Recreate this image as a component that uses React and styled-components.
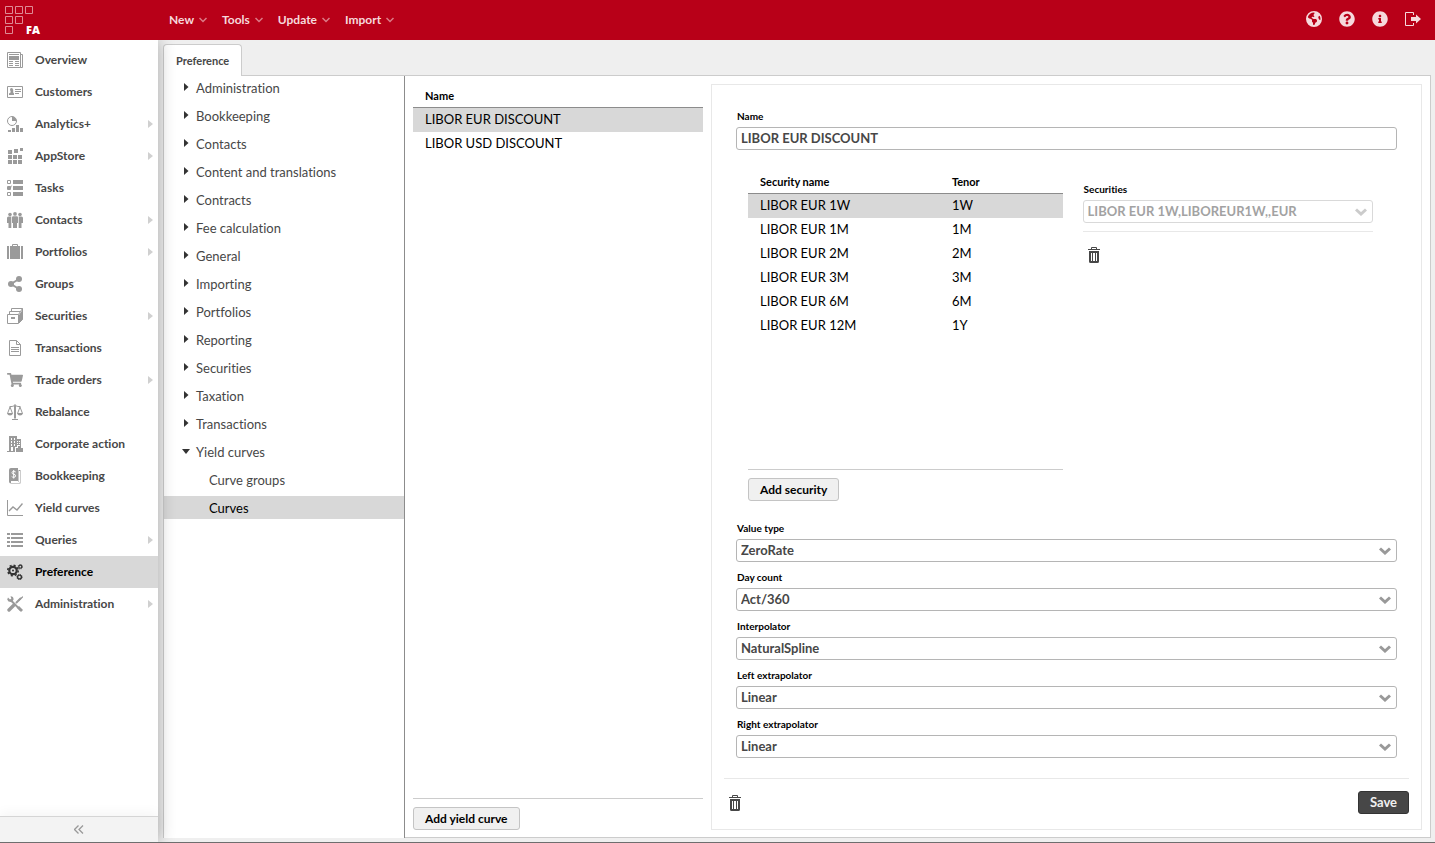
import React, { useState } from 'react'
import styled, { createGlobalStyle } from 'styled-components'
import { FaInfoCircle, FaQuestionCircle, FaShoppingCart } from 'react-icons/fa'
import { FaEarthAmericas } from 'react-icons/fa6'

const GlobalStyle = createGlobalStyle`
    * {
        box-sizing: border-box;
    }

    body {
        margin: 0;
        font-family: Lato, "Open Sans", sans-serif;
        font-size: 13px;
        font-variant-ligatures: none;
        color: #000;
    }

    button, input, select {
        font-family: inherit;
        font-variant-ligatures: none;
        margin: 0;
    }
`

const Page = styled.div`
    display: flex;
    flex-direction: column;
    min-height: 100vh;
    background-color: #efefef;
    border-bottom: 1px solid #6e6e6e;
`

const Header = styled.header`
    display: flex;
    align-items: center;
    height: 40px;
    background-color: #b80018;
`

const LogoLink = styled.a`
    width: 163px;
    height: 40px;
`

const Menu = styled.nav`
    display: flex;
    flex: 1;
    gap: 3px;
`

const MenuButton = styled.button`
    display: flex;
    align-items: center;
    gap: 5px;
    padding: 0 6px;
    border: none;
    background: none;
    font-size: 12px;
    font-weight: 700;
    line-height: 20px;
    color: #f6d9dc;
    cursor: pointer;
`

const HeaderTools = styled.div`
    display: flex;
    gap: 17px;
    padding: 0 14px 2px 0;
`

const IconButton = styled.button`
    display: flex;
    align-items: center;
    justify-content: center;
    width: 16px;
    height: 16px;
    padding: 0;
    border: none;
    background: none;
    color: ${(props) => (props.$light ? '#f6d9dc' : '#474747')};
    cursor: pointer;
`

const Body = styled.div`
    display: flex;
    flex: 1;
`

const Sidebar = styled.aside`
    display: flex;
    flex-direction: column;
    justify-content: space-between;
    flex: none;
    width: 158px;
    z-index: 1;
    background-color: #fff;
    box-shadow: 0 0 16px rgba(0, 0, 0, 0.3);
    clip-path: inset(0 -24px 0 0);
`

const NavList = styled.nav`
    padding-top: 4px;
`

const NavItem = styled.a`
    display: flex;
    align-items: center;
    gap: 12px;
    height: 32px;
    padding: 0 5px 0 7px;
    font-size: 12px;
    font-weight: 700;
    text-decoration: none;
    color: ${(props) => (props.$active ? '#000' : '#474747')};
    background-color: ${(props) => (props.$active ? '#d8d8d8' : 'transparent')};

    > svg:first-child {
        flex: none;
        color: ${(props) => (props.$active ? '#333' : '#9a9a9a')};
    }
`

const NavLabel = styled.span`
    flex: 1;
    padding-bottom: 1px;
`

const Collapse = styled.button`
    display: flex;
    align-items: center;
    justify-content: center;
    height: 26px;
    border: none;
    border-top: 1px solid #d5d5d5;
    background-color: #f3f3f3;
    color: #999;
    box-shadow: 0 -4px 12px rgba(0, 0, 0, 0.04);
`

const Main = styled.main`
    display: flex;
    flex-direction: column;
    flex: 1;
    min-width: 0;
    padding: 4px 4px 4px 5px;
`

const Tab = styled.button`
    align-self: flex-start;
    height: 32px;
    margin-bottom: -1px;
    padding: 0 12px 1px;
    border: 1px solid #ccc;
    border-bottom: none;
    border-radius: 4px 4px 0 0;
    background-color: #fff;
    font-size: 11px;
    font-weight: 700;
    color: #474747;
    z-index: 0;
`

const Workspace = styled.div`
    display: flex;
    flex: 1;
    border: 1px solid #ccc;
    border-bottom: none;
    background-color: #fff;
`

const Tree = styled.nav`
    flex: none;
    width: 241px;
    border-right: 1px solid #8c8c8c;
`

const TreeRow = styled.a`
    display: flex;
    align-items: center;
    gap: 5px;
    height: 23px;
    margin-bottom: 5px;
    padding: 0 0 0 ${(props) => (props.$child ? '45px' : '17px')};
    font-size: 13px;
    text-decoration: none;
    color: ${(props) => (props.$active ? '#000' : '#474747')};
    background-color: ${(props) => (props.$active ? '#d8d8d8' : 'transparent')};
`

const Content = styled.div`
    display: flex;
    flex: 1;
    gap: 8px;
    min-width: 0;
    padding: 8px 8px 7px;
    border-bottom: 1px solid #ccc;
`

const ListColumn = styled.section`
    display: flex;
    flex-direction: column;
    align-items: flex-start;
    flex: none;
    gap: 8px;
    width: 290px;
`

const TableFrame = styled.div`
    flex: 1;
    width: 100%;
    min-height: 240px;
    border-bottom: 1px solid #ccc;
`

const Table = styled.table`
    width: 100%;
    table-layout: fixed;
    border-spacing: 0;

    th {
        width: ${(props) => props.$first};
        height: 24px;
        padding: 0 12px;
        border-bottom: 1px solid #8c8c8c;
        font-size: 11px;
        font-weight: 700;
        line-height: 16px;
        text-align: left;
    }

    th + th {
        width: auto;
    }

    td {
        height: 24px;
        padding: 0 12px 2px;
        line-height: 16px;
    }
`

const Row = styled.tr`
    background-color: ${(props) => (props.$active ? '#d8d8d8' : 'transparent')};
    cursor: pointer;
`

const Button = styled.button`
    height: 23px;
    padding: 0 11px 1px;
    border: 1px solid ${(props) => (props.$dark ? '#333' : '#c4c4c4')};
    border-radius: 3px;
    background-color: ${(props) => (props.$dark ? '#474747' : '#f0f0f0')};
    font-size: ${(props) => (props.$dark ? '13px' : '12px')};
    font-weight: 700;
    color: ${(props) => (props.$dark ? '#f0f0f0' : '#000')};
    cursor: pointer;
`

const Detail = styled.form`
    display: flex;
    flex-direction: column;
    flex: 1;
    min-width: 0;
    padding: 25px 12px 15px;
    border: 1px solid #e8e8e8;
`

const DetailBody = styled.div`
    display: flex;
    flex-direction: column;
    flex: 1;
    padding: 0 12px 20px;
`

const Securities = styled.div`
    display: grid;
    grid-template-columns: 13fr 12fr;
    gap: 20px;
    flex: 1;
    padding: 20px 24px 21px 12px;
`

const SecurityTable = styled.section`
    display: flex;
    flex-direction: column;
    align-items: flex-start;
    gap: 8px;
`

const SecurityEditor = styled.section`
    padding-top: 13px;
`

const EditorTools = styled.div`
    margin-top: 8px;
    padding: 15px 3px;
    border-top: 1px solid #e8e8e8;
`

const Fields = styled.div`
    display: grid;
    gap: 9px;
`

const Field = styled.div`
    display: flex;
    flex-direction: column;
`

const Label = styled.label`
    margin-bottom: 5px;
    padding-left: 1px;
    font-size: 10px;
    font-weight: 700;
    line-height: 12px;
`

const Input = styled.input`
    width: 100%;
    height: 23px;
    padding: 0 4px 2px;
    border: 1px solid #b5b5b5;
    border-radius: 3px;
    font-size: 13px;
    font-weight: 700;
    color: #474747;
`

const SelectBox = styled.div`
    display: grid;
    align-items: center;
    opacity: ${(props) => (props.$disabled ? 0.5 : 1)};

    > * {
        grid-area: 1 / 1;
    }

    > svg {
        justify-self: end;
        margin-right: 6px;
        pointer-events: none;
    }
`

const Select = styled.select`
    width: 100%;
    height: 23px;
    padding: 0 24px 2px 4px;
    border: 1px solid #b5b5b5;
    border-radius: 3px;
    appearance: none;
    background-color: #fff;
    font-size: 13px;
    font-weight: 700;
    color: #474747;

    &:disabled {
        opacity: 1;
    }
`

const DetailFooter = styled.footer`
    display: flex;
    align-items: center;
    justify-content: space-between;
    padding: 12px 0 0 3px;
    border-top: 1px solid #e8e8e8;
`

const Svg = ({ children }) => (
    <svg width="16" height="16" viewBox="0 0 16 16" fill="currentColor" aria-hidden="true">
        {children}
    </svg>
)

const OverviewIcon = () => (
    <Svg>
        <path d="M.5.5h13v15H.5zM13.5 2.5h2v13h-2" fill="none" stroke="currentColor" />
        <path d="M2 2h10v1H2zM2 4h10v4H2zM2 9h4v1H2zM8 9h4v1H8zM2 11h4v1H2zM8 11h4v1H8zM2 13h4v1H2zM8 13h4v1H8z" />
    </Svg>
)

const CustomersIcon = () => (
    <Svg>
        <path d="M.5 2.5h15v11H.5z" fill="none" stroke="currentColor" />
        <path d="M2 11V9.400l1.600-1V5.500h2.600v2.900L7 9.400V11zM8 5h6v1H8zM8 7h6v1H8zM8 9h4v1H8z" />
        <circle cx="4.500" cy="5.500" r="1.500" />
    </Svg>
)

const AnalyticsIcon = () => (
    <Svg>
        <circle cx="5" cy="5" r="4.500" fill="none" stroke="currentColor" />
        <path d="M5 5V.5A4.500 4.500 0 0 1 9.500 5zM1 14h3v2H1zM5 12h3v4H5zM9 9h3v7H9zM13 12h3v4h-3z" />
    </Svg>
)

const AppStoreIcon = () => (
    <Svg>
        <path d="M1 2h4v4H1zM7 1h4v4H7zM13 0h3v3h-3zM1 7h4v4H1zM6 7h4v4H6zM11 7h4v4h-4zM1 12h4v4H1zM6 12h4v4H6zM11 12h4v4h-4z" />
    </Svg>
)

const TasksIcon = () => (
    <Svg>
        <path d="M.5.500h3v3h-3zM.5 6.500h3v3h-3zM.5 12.500h3v3h-3z" fill="none" stroke="currentColor" />
        <path d="M6 0h10v4H6zM6 6h10v4H6zM6 12h10v4H6zM1 7h2v2H1zM3 7l2-2-1 3z" />
    </Svg>
)

const ContactsIcon = () => (
    <Svg>
        <circle cx="3" cy="2.500" r="1.800" />
        <circle cx="13" cy="2.500" r="1.800" />
        <circle cx="8" cy="1.900" r="1.900" />
        <path d="M0 6q0-1.500 1.500-1.500h2.800V16H1.500v-5H0zM16 6q0-1.500-1.500-1.500h-2.800V16h2.800v-5H16zM5 5.500q0-1.200 1.200-1.200h3.600q1.200 0 1.200 1.200V11h-1v5H6v-5H5z" />
    </Svg>
)

const PortfolioIcon = () => (
    <Svg>
        <path d="M5.500 3V.5h5V3" fill="none" stroke="currentColor" />
        <path d="M0 2h2v13H0zM3 2h10v13H3zM14 2h2v13h-2z" />
    </Svg>
)

const GroupsIcon = () => (
    <Svg>
        <path d="M12 3 4 8l8 5" fill="none" stroke="currentColor" strokeWidth="2" />
        <circle cx="12" cy="3" r="3" />
        <circle cx="4" cy="8" r="3" />
        <circle cx="12" cy="13" r="3" />
    </Svg>
)

const SecuritiesIcon = () => (
    <Svg>
        <path d="M.5 6.500h11v9H.5zM2.500 6V3.500h11M4.500 3V.500h11v11L12 15M11.500 6.500l2-3 2-3" fill="none" stroke="currentColor" />
        <path d="M12 7l2-3 2-3v10l-4 4zM4 9h4v2H4z" />
    </Svg>
)

const TransactionsIcon = () => (
    <Svg>
        <path d="M2.500.500h7l4 4v11h-11zM9.500.5v4h4" fill="none" stroke="currentColor" />
        <path d="M4 7h8v1H4zM4 9h8v1H4zM4 11h8v1H4z" />
    </Svg>
)

const RebalanceIcon = () => (
    <Svg>
        <path d="M8 0v15M2.500 2.500q2.500.5 5.500-1 3 1.500 5.500 1M3 3 .5 9.500M3 3l2.500 6.500M13 3l-2.500 6.500M13 3l2.500 6.500M5 15.500h6" fill="none" stroke="currentColor" />
        <path d="M0 9h6q-.5 2.500-3 2.500T0 9zM10 9h6q-.5 2.500-3 2.500T10 9zM7 2h2v12H7z" />
    </Svg>
)

const CorporateIcon = () => (
    <Svg>
        <path fillRule="evenodd" d="M2 0h8v3h4v7h-1V9h-3v2H8v5H0v-1h2zM4 2v2h1V2zM7 2v2h1V2zM4 5v2h1V5zM7 5v2h1V5zM4 8v2h1V8zM7 8v2h1V8zM4 11v4h2v-4zM10 5v1h1V5zM12 5v1h1V5zM10 7v1h1V7zM12 7v1h1V7z" />
        <path d="M9 12h2v-2h3v2h2v4H9z" />
    </Svg>
)

const BookIcon = () => (
    <Svg>
        <path d="M2 2q0-2 2-2h7v13H4v1h7.500V2h2v13.500H4q-2 0-2-2z" />
        <path d="M8.700 4Q8 3.300 6.700 3.300 5 3.400 5 4.700q0 1.300 1.700 1.500 1.900.2 1.900 1.700 0 1.300-1.900 1.400-1.300 0-2-.8M6.700 2v8.500M12.500 3v11.500H4" fill="none" stroke="#fff" />
    </Svg>
)

const YieldIcon = () => (
    <Svg>
        <path d="M.5 0v15.500H16" fill="none" stroke="currentColor" />
        <path d="M2 11l4-4 4 3 5.500-6.500" fill="none" stroke="currentColor" strokeWidth="1.400" />
    </Svg>
)

const QueriesIcon = () => (
    <Svg>
        <path d="M0 1h3v2H0zM4 1h12v2H4zM0 5h3v2H0zM4 5h12v2H4zM0 9h3v2H0zM4 9h12v2H4zM0 13h3v2H0zM4 13h12v2H4z" />
    </Svg>
)

const GearsIcon = () => (
    <Svg>
        <g fill="none" stroke="currentColor">
            <circle cx="6" cy="6.500" r="3.700" strokeWidth="2.200" />
            <circle cx="6" cy="6.500" r="5.200" strokeWidth="1.600" strokeDasharray="2.040 2.040" />
            <circle cx="13.300" cy="2.700" r="1.500" strokeWidth="1.200" />
            <circle cx="13.300" cy="2.700" r="2.300" strokeWidth=".8" strokeDasharray="1 .8" />
            <circle cx="12.500" cy="13" r="1.900" strokeWidth="1.400" />
            <circle cx="12.500" cy="13" r="2.700" strokeWidth=".8" strokeDasharray="1.200 .920" />
        </g>
        <circle cx="6" cy="6.500" r="1" />
    </Svg>
)

const ToolsIcon = () => (
    <Svg>
        <path d="M4 4.500 13.500 14M13.500 2.500 9.500 6.500" fill="none" stroke="currentColor" strokeWidth="2" strokeLinecap="round" />
        <path d="M6.500 9.500 2 14" fill="none" stroke="currentColor" strokeWidth="3.400" strokeLinecap="round" />
        <path d="M1 1.500 3 3.500 4.300 2.700 3.500.3Q6.500.2 6.600 3.600L5 6Q1 6.500.2 3.500zM15.800 0 16 1.500 12 5 11 4zM10 12l2-2 4 4-2 2z" />
    </Svg>
)

const LogoutIcon = () => (
    <Svg>
        <path d="M8.500 4V1.500h-8v13h8V12" fill="none" stroke="currentColor" />
        <path d="M6 6h5V3.500L16 8l-5 4.500V10H6z" />
    </Svg>
)

const TrashIcon = () => (
    <Svg>
        <path d="M5.500 2V.5h5V2" fill="none" stroke="currentColor" />
        <path d="M2 2h12v1H2z" />
        <path fillRule="evenodd" d="M3 4h10v1H3zM3 5h10v9.500q0 1.500-1.500 1.500h-7Q3 16 3 14.500zM5 6v8h1V6zM7 6v8h2V6zM10 6v8h1V6z" />
    </Svg>
)

const MenuChevron = () => (
    <svg width="8" height="8" viewBox="0 0 8 8" fill="none" stroke="#dc7c88" strokeWidth="1.500" aria-hidden="true">
        <path d="M.5 2 4 5.500 7.500 2" />
    </svg>
)

const SelectChevron = () => (
    <svg width="12" height="8" viewBox="0 0 12 8" fill="none" stroke="#999" strokeWidth="3" aria-hidden="true">
        <path d="M1 1.500 6 6l5-4.500" />
    </svg>
)

const Arrow = ({ open }) => (
    <svg width="10" height="10" viewBox="0 0 10 10" fill="#333" aria-hidden="true">
        <path d={open ? 'M1 2h8L5 7z' : 'M3 0l4.500 4L3 8z'} />
    </svg>
)

const NavArrow = () => (
    <svg width="5" height="8" viewBox="0 0 5 8" fill="#d0d0d0" aria-hidden="true">
        <path d="M0 0l5 4-5 4z" />
    </svg>
)

const Logo = () => (
    <svg width="48" height="40" viewBox="0 0 48 40" aria-hidden="true">
        <path
            d="M5.500 6.500h7v7h-7zM15.500 6.500h7v7h-7zM25.500 6.500h7v7h-7zM5.500 16.500h7v7h-7zM15.500 16.500h7v7h-7zM5.500 26.500h7v7h-7z"
            fill="none"
            stroke="#df8a94"
        />
        <text x="26" y="34" fontFamily="Open Sans, sans-serif" fontSize="11" fontWeight="800" fill="#fff">FA</text>
    </svg>
)

const navItems = [
    { label: 'Overview', icon: <OverviewIcon /> },
    { label: 'Customers', icon: <CustomersIcon /> },
    { label: 'Analytics+', icon: <AnalyticsIcon />, more: true },
    { label: 'AppStore', icon: <AppStoreIcon />, more: true },
    { label: 'Tasks', icon: <TasksIcon /> },
    { label: 'Contacts', icon: <ContactsIcon />, more: true },
    { label: 'Portfolios', icon: <PortfolioIcon />, more: true },
    { label: 'Groups', icon: <GroupsIcon /> },
    { label: 'Securities', icon: <SecuritiesIcon />, more: true },
    { label: 'Transactions', icon: <TransactionsIcon /> },
    { label: 'Trade orders', icon: <FaShoppingCart size={16} />, more: true },
    { label: 'Rebalance', icon: <RebalanceIcon /> },
    { label: 'Corporate action', icon: <CorporateIcon /> },
    { label: 'Bookkeeping', icon: <BookIcon /> },
    { label: 'Yield curves', icon: <YieldIcon /> },
    { label: 'Queries', icon: <QueriesIcon />, more: true },
    { label: 'Preference', icon: <GearsIcon />, active: true },
    { label: 'Administration', icon: <ToolsIcon />, more: true },
]

const treeItems = [
    'Administration',
    'Bookkeeping',
    'Contacts',
    'Content and translations',
    'Contracts',
    'Fee calculation',
    'General',
    'Importing',
    'Portfolios',
    'Reporting',
    'Securities',
    'Taxation',
    'Transactions',
]

const curves = ['LIBOR EUR DISCOUNT', 'LIBOR USD DISCOUNT']

const securities = [
    ['LIBOR EUR 1W', '1W'],
    ['LIBOR EUR 1M', '1M'],
    ['LIBOR EUR 2M', '2M'],
    ['LIBOR EUR 3M', '3M'],
    ['LIBOR EUR 6M', '6M'],
    ['LIBOR EUR 12M', '1Y'],
]

const settings = [
    { id: 'value-type', label: 'Value type', value: 'ZeroRate' },
    { id: 'day-count', label: 'Day count', value: 'Act/360' },
    { id: 'interpolator', label: 'Interpolator', value: 'NaturalSpline' },
    { id: 'left-extrapolator', label: 'Left extrapolator', value: 'Linear' },
    { id: 'right-extrapolator', label: 'Right extrapolator', value: 'Linear' },
]

const SelectField = ({ id, label, value, disabled }) => (
    <Field>
        <Label htmlFor={id}>{label}</Label>
        <SelectBox $disabled={disabled}>
            <Select id={id} defaultValue={value} disabled={disabled}>
                <option>{value}</option>
            </Select>
            <SelectChevron />
        </SelectBox>
    </Field>
)

const App = () => {
    const [name, setName] = useState('LIBOR EUR DISCOUNT')
    const [curve, setCurve] = useState(0)
    const [security, setSecurity] = useState(0)

    return (
        <Page>
            <GlobalStyle />
            <Header>
                <LogoLink href="#" aria-label="FA">
                    <Logo />
                </LogoLink>
                <Menu>
                    {['New', 'Tools', 'Update', 'Import'].map((item) => (
                        <MenuButton key={item} type="button">
                            {item}
                            <MenuChevron />
                        </MenuButton>
                    ))}
                </Menu>
                <HeaderTools>
                    <IconButton $light type="button" aria-label="Language"><FaEarthAmericas size={16} /></IconButton>
                    <IconButton $light type="button" aria-label="Help"><FaQuestionCircle size={16} /></IconButton>
                    <IconButton $light type="button" aria-label="Info"><FaInfoCircle size={16} /></IconButton>
                    <IconButton $light type="button" aria-label="Log out"><LogoutIcon /></IconButton>
                </HeaderTools>
            </Header>
            <Body>
                <Sidebar>
                    <NavList>
                        {navItems.map((item) => (
                            <NavItem key={item.label} href="#" $active={item.active}>
                                {item.icon}
                                <NavLabel>{item.label}</NavLabel>
                                {item.more && <NavArrow />}
                            </NavItem>
                        ))}
                    </NavList>
                    <Collapse type="button" aria-label="Collapse menu">
                        <svg width="10" height="9" viewBox="0 0 10 9" fill="none" stroke="currentColor" strokeWidth="1.300">
                            <path d="M4.500.5l-4 4 4 4M9 .5l-4 4 4 4" />
                        </svg>
                    </Collapse>
                </Sidebar>
                <Main>
                    <Tab type="button">Preference</Tab>
                    <Workspace>
                        <Tree>
                            {treeItems.map((item) => (
                                <TreeRow key={item} href="#">
                                    <Arrow />
                                    {item}
                                </TreeRow>
                            ))}
                            <TreeRow href="#">
                                <Arrow open />
                                Yield curves
                            </TreeRow>
                            <TreeRow href="#" $child>Curve groups</TreeRow>
                            <TreeRow href="#" $child $active>Curves</TreeRow>
                        </Tree>
                        <Content>
                            <ListColumn>
                                <TableFrame>
                                    <Table $first="100%">
                                        <thead>
                                            <tr><th>Name</th></tr>
                                        </thead>
                                        <tbody>
                                            {curves.map((item, i) => (
                                                <Row key={item} $active={i === curve} onClick={() => setCurve(i)}>
                                                    <td>{item}</td>
                                                </Row>
                                            ))}
                                        </tbody>
                                    </Table>
                                </TableFrame>
                                <Button type="button">Add yield curve</Button>
                            </ListColumn>
                            <Detail onSubmit={(e) => e.preventDefault()}>
                                <DetailBody>
                                    <Field>
                                        <Label htmlFor="name">Name</Label>
                                        <Input id="name" value={name} onChange={(e) => setName(e.target.value)} />
                                    </Field>
                                    <Securities>
                                        <SecurityTable>
                                            <TableFrame>
                                                <Table $first="61%">
                                                    <thead>
                                                        <tr>
                                                            <th>Security name</th>
                                                            <th>Tenor</th>
                                                        </tr>
                                                    </thead>
                                                    <tbody>
                                                        {securities.map(([title, tenor], i) => (
                                                            <Row key={title} $active={i === security} onClick={() => setSecurity(i)}>
                                                                <td>{title}</td>
                                                                <td>{tenor}</td>
                                                            </Row>
                                                        ))}
                                                    </tbody>
                                                </Table>
                                            </TableFrame>
                                            <Button type="button">Add security</Button>
                                        </SecurityTable>
                                        <SecurityEditor>
                                            <SelectField id="securities" label="Securities" value="LIBOR EUR 1W,LIBOREUR1W,,EUR" disabled />
                                            <EditorTools>
                                                <IconButton type="button" aria-label="Remove security"><TrashIcon /></IconButton>
                                            </EditorTools>
                                        </SecurityEditor>
                                    </Securities>
                                    <Fields>
                                        {settings.map((item) => (
                                            <SelectField key={item.id} {...item} />
                                        ))}
                                    </Fields>
                                </DetailBody>
                                <DetailFooter>
                                    <IconButton type="button" aria-label="Delete curve"><TrashIcon /></IconButton>
                                    <Button $dark type="submit">Save</Button>
                                </DetailFooter>
                            </Detail>
                        </Content>
                    </Workspace>
                </Main>
            </Body>
        </Page>
    )
}

export default App
